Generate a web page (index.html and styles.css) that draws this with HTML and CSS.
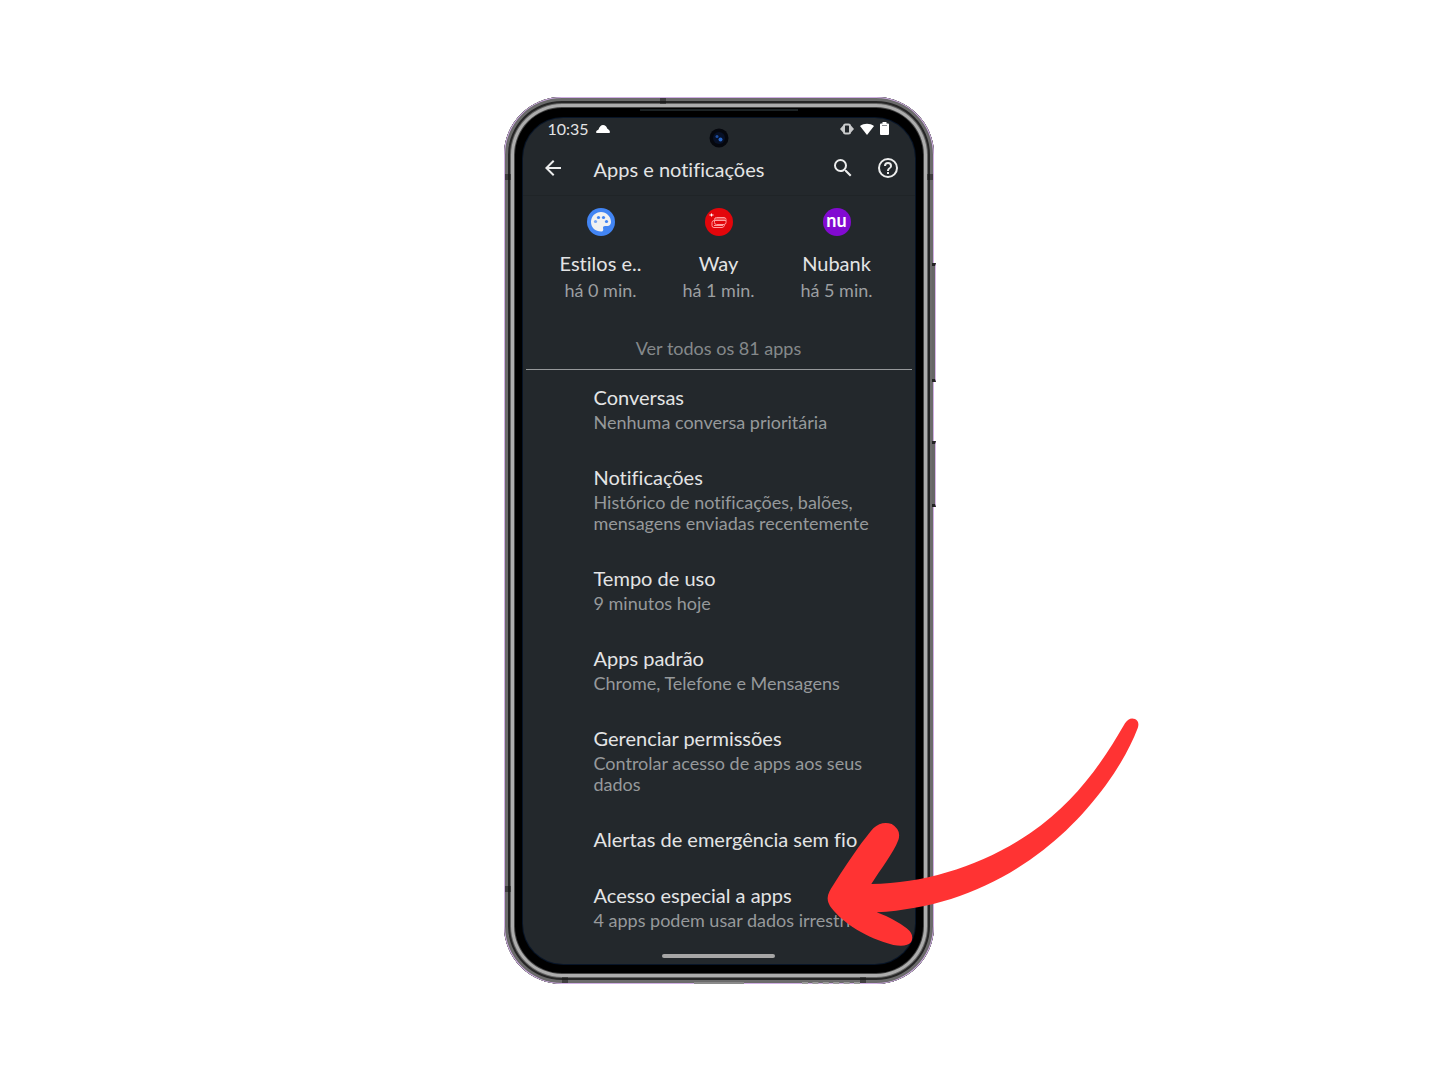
FILE: index.html
```html
<!DOCTYPE html>
<html lang="pt-BR">
<head>
    <meta charset="UTF-8">
    <meta name="viewport" content="width=device-width, initial-scale=1.0">
    <title>Apps e notificações</title>
    <link rel="stylesheet" href="styles.css">
</head>
<body>
    <main class="phone">
        <!-- frame details -->
        <span class="side-button volume"></span>
        <span class="side-button power"></span>
        <span class="band left-top"></span>
        <span class="band left-bottom"></span>
        <span class="band right-top"></span>
        <span class="band top"></span>
        <span class="band bottom-left"></span>
        <span class="band bottom-right"></span>
        <span class="earpiece"></span>
        <span class="usb"></span>
        <span class="speaker"></span>

        <div class="screen">
            <svg class="camera" viewBox="0 0 20 20">
                <circle cx="10" cy="10" r="9.5" fill="#05070d"/>
                <circle cx="10" cy="10" r="6" fill="#081127"/>
                <circle cx="8" cy="8.500" r="1.500" fill="#1d4fa3"/>
                <circle cx="11.500" cy="11.500" r="2" fill="#2867c9"/>
            </svg>

            <div class="status-bar">
                <span class="time">10:35</span>
                <svg class="cloud" viewBox="0 0 14 8"><path d="M1 8Q0 8 0 7 0 5.500 2.500 4.500 4 0 7 0q3.200 0 4.200 3.500Q14 5 14 7q0 1-1 1z" fill="#fff"/></svg>
                <div class="status-icons">
                    <svg width="14" height="12" viewBox="0 0 14 12">
                        <path d="M3.500 2L0 6l3.500 4zM10.500 2L14 6l-3.500 4z" fill="#c9cbcc"/>
                        <rect x="4" y="1.500" width="6" height="9" rx="1.500" fill="none" stroke="#c9cbcc" stroke-width="2"/>
                    </svg>
                    <svg width="14" height="12" viewBox="0 0 14 12"><path d="M0 3C4 0 10 0 14 3L7 12z" fill="#fff"/></svg>
                    <svg width="9" height="13" viewBox="0 0 9 13"><path d="M2.500 0h4v1.500H8q1 0 1 1V12q0 1-1 1H1q-1 0-1-1V2.500q0-1 1-1h1.500z" fill="#fff"/><path d="M2 3.500h5" stroke="#8a8d90"/></svg>
                </div>
            </div>

            <header class="toolbar">
                <button class="icon-button" aria-label="Voltar">
                    <svg viewBox="0 0 24 24"><path d="M20 11H7.830l5.590-5.590L12 4l-8 8 8 8 1.410-1.410L7.830 13H20z"/></svg>
                </button>
                <h1>Apps e notificações</h1>
                <button class="icon-button" aria-label="Pesquisar">
                    <svg viewBox="0 0 24 24"><path d="M15.500 14h-.79l-.28-.27A6.470 6.470 0 0 0 16 9.500 6.500 6.500 0 1 0 9.500 16c1.610 0 3.090-.59 4.230-1.570l.27.28v.79l5 4.990L20.490 19zm-6 0a4.500 4.500 0 1 1 0-9 4.500 4.500 0 0 1 0 9z"/></svg>
                </button>
                <button class="icon-button" aria-label="Ajuda">
                    <svg viewBox="0 0 24 24"><path d="M11 18h2v-2h-2zm1-16a10 10 0 1 0 0 20 10 10 0 0 0 0-20zm0 18a8 8 0 1 1 0-16 8 8 0 0 1 0 16zm0-14a4 4 0 0 0-4 4h2a2 2 0 1 1 4 0c0 2-3 1.750-3 5h2c0-2.250 3-2.500 3-5a4 4 0 0 0-4-4z"/></svg>
                </button>
            </header>

            <section class="recent-apps">
                <button class="app">
                    <svg class="app-icon" viewBox="0 0 28 28">
                        <circle cx="14" cy="14" r="14" fill="#4285f4"/>
                        <path d="M14 4C8.500 4 4 8.300 4 14s4.500 9.500 10 9.500c1.800 0 2.600-1.200 2.200-2.600-.6-1.700.1-2.900 2-2.900h2.300c2.300 0 3.500-1.800 3.500-4C24 8.500 19.500 4 14 4z" fill="#f1f1f1"/>
                        <circle cx="8.500" cy="13.500" r="1.600" fill="#78a6f5"/>
                        <circle cx="11.500" cy="9.500" r="1.600" fill="#4285f4"/>
                        <circle cx="16.500" cy="9.500" r="1.600" fill="#4285f4"/>
                        <circle cx="19.500" cy="13.500" r="1.600" fill="#4285f4"/>
                    </svg>
                    <span class="app-name">Estilos e..</span>
                    <span class="app-time">há 0 min.</span>
                </button>
                <button class="app">
                    <svg class="app-icon" viewBox="0 0 28 28">
                        <circle cx="14" cy="14" r="14" fill="#e3060b"/>
                        <g fill="none" stroke="#ff9c9c">
                            <rect x="9.500" y="9.500" width="11.500" height="7" rx="2"/>
                            <path d="M10 12.500h11M10 11h10M9 12.500q-2 .3-2 2v3q0 2 2 2h8q2 0 2.500-2.500M9 17.500h9"/>
                        </g>
                        <path d="M6.500 5.500v3M4.500 7h4" stroke="#fff"/>
                    </svg>
                    <span class="app-name">Way</span>
                    <span class="app-time">há 1 min.</span>
                </button>
                <button class="app">
                    <span class="app-icon nubank">nu</span>
                    <span class="app-name">Nubank</span>
                    <span class="app-time">há 5 min.</span>
                </button>
            </section>

            <a class="see-all" href="#">Ver todos os 81 apps</a>

            <nav class="settings">
                <a href="#"><h2>Conversas</h2><p>Nenhuma conversa prioritária</p></a>
                <a href="#"><h2>Notificações</h2><p>Histórico de notificações, balões,<br>mensagens enviadas recentemente</p></a>
                <a href="#"><h2>Tempo de uso</h2><p>9 minutos hoje</p></a>
                <a href="#"><h2>Apps padrão</h2><p>Chrome, Telefone e Mensagens</p></a>
                <a href="#"><h2>Gerenciar permissões</h2><p>Controlar acesso de apps aos seus<br>dados</p></a>
                <a href="#"><h2>Alertas de emergência sem fio</h2></a>
                <a href="#"><h2>Acesso especial a apps</h2><p>4 apps podem usar dados irrestritos</p></a>
            </nav>

            <div class="home-handle"></div>
        </div>

        <svg class="arrow" viewBox="0 0 1020 780">
            <path d="M945 70Q958 50 975 57 990 65 983 85C940 200 830 350 700 450 550 565 390 625 200 637Q250 655 290 685 315 705 303 727 290 742 250 735C170 715 100 670 65 625Q45 600 58 575C85 530 150 430 190 385Q215 362 245 372 275 390 265 420C250 460 210 510 184 552 350 550 520 495 660 400 790 310 870 200 945 70z" fill="#ff3333"/>
        </svg>
    </main>
</body>
</html>
```

FILE: styles.css
```css
* {
    box-sizing: border-box;
}
body {
    font-family: Lato, sans-serif;
    font-variant-ligatures: none;
    display: flex;
    justify-content: center;
    align-items: center;
    min-height: 100vh;
    margin: 0;
    padding-right: 3px;
    background-color: #fff;
}
h1, h2, p {
    margin: 0;
    font-weight: 400;
}
a {
    color: inherit;
    text-decoration: none;
}
button {
    padding: 0;
    border: none;
    background: none;
    color: inherit;
    font-family: inherit;
    font-variant-ligatures: none;
    cursor: pointer;
}

/* phone body */
.phone {
    position: relative;
    width: 430px;
    padding: 21px 19px 20px;
    border-radius: 58px;
    background-color: #000;
    box-shadow:
        inset 0 0 0 1px #d0aee4,
        inset 0 0 0 4px #6b6b6b,
        inset 0 0 0 6px #262626,
        inset 0 0 0 7px #666,
        inset 0 0 0 10px #adadad,
        inset 0 0 0 11px #444;
}
.side-button {
    position: absolute;
    right: -2px;
    width: 4px;
    background-color: #666;
    border-top: 3px solid #222;
    border-bottom: 3px solid #222;
    border-right: 1px solid #d5b5e6;
}
.volume {
    top: 166px;
    height: 119px;
}
.power {
    top: 344px;
    height: 66px;
}
.band {
    position: absolute;
    width: 6px;
    height: 6px;
    background-color: rgba(20, 20, 20, 0.5);
}
.left-top {
    top: 77px;
    left: 1px;
}
.left-bottom {
    bottom: 92px;
    left: 1px;
}
.right-top {
    top: 77px;
    right: 1px;
}
.top {
    top: 1px;
    left: 156px;
}
.bottom-left {
    bottom: 1px;
    left: 58px;
}
.bottom-right {
    bottom: 1px;
    right: 68px;
}
.earpiece {
    position: absolute;
    top: 12px;
    left: 136px;
    width: 158px;
    height: 2px;
    background-color: #1c2224;
}
.usb {
    position: absolute;
    bottom: 0;
    left: 190px;
    width: 50px;
    height: 2px;
    background-color: #8a8a8a;
}
.speaker {
    position: absolute;
    bottom: 0;
    right: 74px;
    width: 58px;
    border-bottom: 2px dashed #999;
}

/* screen */
.screen {
    position: relative;
    display: flex;
    flex-direction: column;
    overflow: hidden;
    border-radius: 40px;
    background-color: #23282c;
    color: #e3e4e5;
    box-shadow: 0 0 0 1px #071427;
}
.camera {
    position: absolute;
    top: 10px;
    left: 50%;
    width: 20px;
    height: 20px;
    margin-left: -10px;
}
.status-bar {
    display: flex;
    align-items: center;
    height: 22px;
    padding: 0 26px 0 25px;
    font-size: 16px;
}
.cloud {
    width: 14px;
    height: 8px;
    margin-left: 7px;
}
.status-icons {
    display: flex;
    align-items: center;
    gap: 6px;
    margin-left: auto;
}
.toolbar {
    display: flex;
    align-items: center;
    height: 56px;
    padding: 2px 15px 0 18px;
    border-bottom: 1px solid #1f2427;
}
.toolbar h1 {
    flex: 1;
    margin-left: 29px;
    padding-top: 2px;
    font-size: 20px;
}
.icon-button {
    width: 24px;
    height: 24px;
}
.icon-button + .icon-button {
    margin-left: 21px;
}
.icon-button svg {
    display: block;
    fill: #eceded;
}
.recent-apps {
    display: grid;
    grid-template-columns: repeat(3, 118px);
    justify-content: center;
    padding-top: 12px;
}
.app {
    display: flex;
    flex-direction: column;
    align-items: center;
}
.app-icon {
    width: 28px;
    height: 28px;
    margin-bottom: 14px;
}
.nubank {
    border-radius: 50%;
    background-color: #820ad1;
    color: #fff;
    font-size: 18px;
    font-weight: 700;
    line-height: 24px;
}
.app-name {
    font-size: 20px;
    line-height: 27px;
}
.app-time {
    font-size: 18px;
    line-height: 27px;
    color: #9c9fa1;
}
.see-all {
    margin: 33px 3px 0;
    padding-bottom: 9px;
    border-bottom: 1px solid #96999b;
    color: #85898b;
    font-size: 18px;
    line-height: 23px;
    text-align: center;
}
.settings {
    display: flex;
    flex-direction: column;
    gap: 33px;
    padding: 16px 0 0 71px;
    white-space: nowrap;
}
.settings h2 {
    font-size: 20px;
    line-height: 23px;
}
.settings p {
    margin-top: 3px;
    color: #96999b;
    font-size: 18px;
    line-height: 21px;
}
.home-handle {
    align-self: center;
    width: 113px;
    height: 4px;
    margin: 23px 0 6px;
    border-radius: 2px;
    background-color: #a6a6a6;
}

.arrow {
    position: absolute;
    top: 603px;
    left: 306px;
    width: 340px;
    height: 260px;
    pointer-events: none;
}
```
